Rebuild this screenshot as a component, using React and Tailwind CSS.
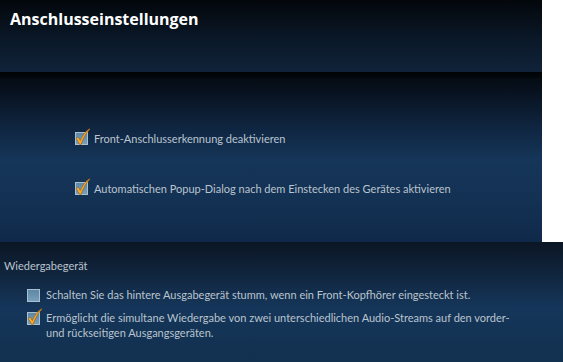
import React from "react";

function Box({ checked }) {
  return (
    <svg width="16" height="17" viewBox="0 0 16 17" className="shrink-0">
      <defs>
        <linearGradient id="bx" x1="0" y1="0" x2="0" y2="1">
          <stop offset="0" stopColor="#5d86a6" />
          <stop offset="1" stopColor="#79a0bb" />
        </linearGradient>
        <linearGradient id="ck" x1="0" y1="0" x2="1" y2="1">
          <stop offset="0" stopColor="#ffd24a" />
          <stop offset="1" stopColor="#f08a10" />
        </linearGradient>
      </defs>
      <rect x="1.5" y="4.5" width="12" height="12" fill="url(#bx)" stroke="#a9c0d0" strokeWidth="1" />
      {checked && (
        <path
          d="M2.2 10.2 L4.2 9.2 L6.3 12.6 C8.5 7.5 11.5 3.2 15.6 0.6 L15.8 1.4 C12.3 4.6 9.4 9.8 7.2 16.4 L5.6 16.4 Z"
          fill="url(#ck)"
          stroke="#8a4a05"
          strokeWidth="0.5"
        />
      )}
    </svg>
  );
}

function Row({ checked, children, className = "" }) {
  return (
    <div className={"flex items-start gap-[4px] " + className}>
      <div className="-mt-[2px]">
        <Box checked={checked} />
      </div>
      <div>{children}</div>
    </div>
  );
}

export default function App() {
  return (
    <div
      className="w-[563px] h-[362px] bg-white flex flex-col overflow-hidden"
      style={{ fontFamily: 'Lato, "Noto Sans", sans-serif' }}
    >
      <div className="w-[542px] flex flex-col">
        <div className="h-[72px] bg-[linear-gradient(180deg,#03070b_0%,#0a1828_55%,#10233a_100%)] pl-[10px] pt-[7px]">
          <div className="text-white font-bold text-[16px]" style={{ fontFamily: '"Open Sans", sans-serif' }}>
            Anschlusseinstellungen
          </div>
        </div>
        <div className="h-[6px] bg-[linear-gradient(180deg,#010305,#03080e)]" />
        <div className="h-[164px] bg-[linear-gradient(180deg,#050b13_0%,#0f2540_30%,#153559_50%,#133153_75%,#10294a_100%)] pl-[74px] pt-[52px] flex flex-col gap-[33px] text-[#bac4ce] text-[11px] leading-[17px]">
          <Row checked>Front-Anschlusserkennung deaktivieren</Row>
          <Row checked>Automatischen Popup-Dialog nach dem Einstecken des Gerätes aktivieren</Row>
        </div>
      </div>
      <div className="h-[120px] bg-[linear-gradient(180deg,#0b1624_0%,#10243c_25%,#15365a_55%,#12304f_100%)] text-[#bac4ce] text-[11px] leading-[15px] flex flex-col">
        <div className="pl-[4px] pt-[16px]">Wiedergabegerät</div>
        <div className="pl-[26px] pt-[14px] flex flex-col gap-[8px]">
          <Row>Schalten Sie das hintere Ausgabegerät stumm, wenn ein Front-Kopfhörer eingesteckt ist.</Row>
          <Row checked className="w-[498px]">
            Ermöglicht die simultane Wiedergabe von zwei unterschiedlichen Audio-Streams auf den vorder- und rückseitigen Ausgangsgeräten.
          </Row>
        </div>
      </div>
    </div>
  );
}
